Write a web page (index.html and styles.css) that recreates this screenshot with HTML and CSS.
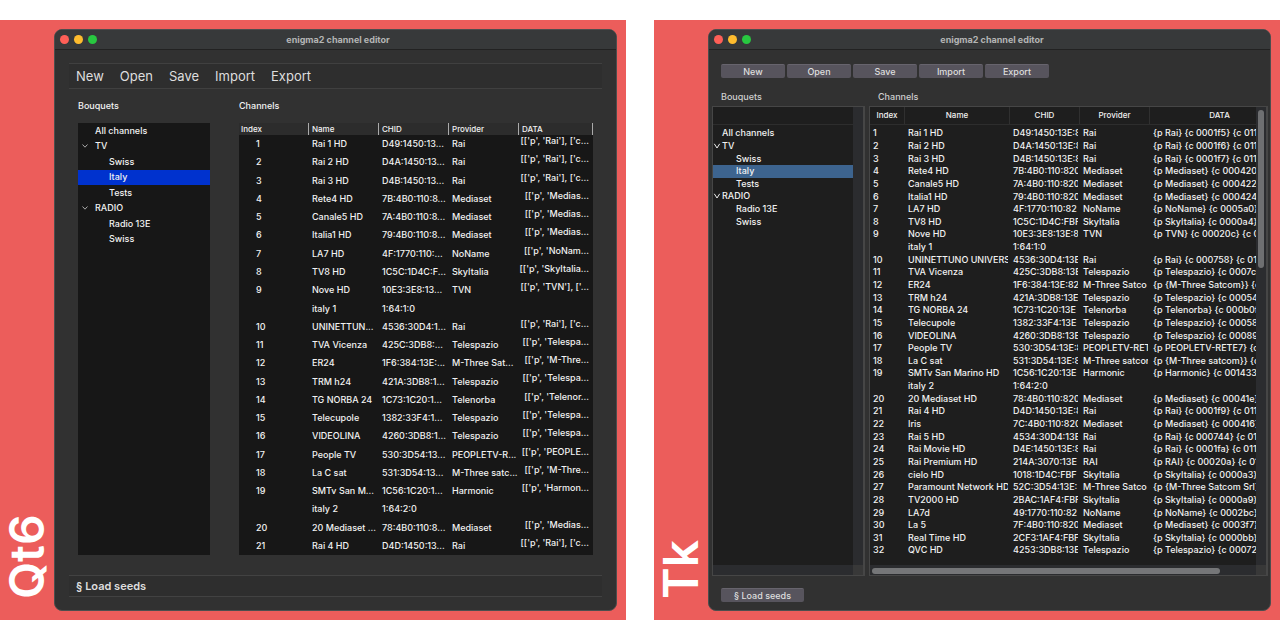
FILE: index.html
```
<!DOCTYPE html>
<html lang="en">
<head>
<meta charset="utf-8">
<title>enigma2 channel editor</title>
<link rel="stylesheet" href="styles.css">
</head>
<body>
<section class="panel">
  <h2 class="toolkit">Qt6</h2>
  <main class="window qt">
    <header class="titlebar"><span class="light red"></span><span class="light yellow"></span><span class="light green"></span><h1 class="title">enigma2 channel editor</h1></header>
    <nav class="qt-toolbar"><button>New</button><button>Open</button><button>Save</button><button>Import</button><button>Export</button></nav>
    <div class="qt-body">
      <section class="qt-side">
        <h3 class="label">Bouquets</h3>
        <div class="well">
          <ul class="tree">
            <li>All channels</li>
            <li><svg class="chevron" viewBox="0 0 8 8"><path d="M1.5 2.5 4 5.2 6.5 2.5"/></svg>TV</li>
            <li class="child">Swiss</li>
            <li class="child selected">Italy</li>
            <li class="child">Tests</li>
            <li><svg class="chevron" viewBox="0 0 8 8"><path d="M1.5 2.5 4 5.2 6.5 2.5"/></svg>RADIO</li>
            <li class="child">Radio 13E</li>
            <li class="child">Swiss</li>
          </ul>
        </div>
      </section>
      <section class="qt-main">
        <h3 class="label">Channels</h3>
        <table class="well">
          <thead><tr><th>Index</th><th>Name</th><th>CHID</th><th>Provider</th><th>DATA</th></tr></thead>
          <tbody>
            <tr><td>1</td><td>Rai 1 HD</td><td>D49:1450:13...</td><td>Rai</td><td>[['p', 'Rai'], ['c...</td></tr>
            <tr><td>2</td><td>Rai 2 HD</td><td>D4A:1450:13...</td><td>Rai</td><td>[['p', 'Rai'], ['c...</td></tr>
            <tr><td>3</td><td>Rai 3 HD</td><td>D4B:1450:13...</td><td>Rai</td><td>[['p', 'Rai'], ['c...</td></tr>
            <tr><td>4</td><td>Rete4 HD</td><td>7B:4B0:110:8...</td><td>Mediaset</td><td>[['p', 'Medias...</td></tr>
            <tr><td>5</td><td>Canale5 HD</td><td>7A:4B0:110:8...</td><td>Mediaset</td><td>[['p', 'Medias...</td></tr>
            <tr><td>6</td><td>Italia1 HD</td><td>79:4B0:110:8...</td><td>Mediaset</td><td>[['p', 'Medias...</td></tr>
            <tr><td>7</td><td>LA7 HD</td><td>4F:1770:110:...</td><td>NoName</td><td>[['p', 'NoNam...</td></tr>
            <tr><td>8</td><td>TV8 HD</td><td>1C5C:1D4C:F...</td><td>SkyItalia</td><td>[['p', 'SkyItalia...</td></tr>
            <tr><td>9</td><td>Nove HD</td><td>10E3:3E8:13...</td><td>TVN</td><td>[['p', 'TVN'], ['...</td></tr>
            <tr><td></td><td>italy 1</td><td>1:64:1:0</td><td></td><td></td></tr>
            <tr><td>10</td><td>UNINETTUN...</td><td>4536:30D4:1...</td><td>Rai</td><td>[['p', 'Rai'], ['c...</td></tr>
            <tr><td>11</td><td>TVA Vicenza</td><td>425C:3DB8:...</td><td>Telespazio</td><td>[['p', 'Telespa...</td></tr>
            <tr><td>12</td><td>ER24</td><td>1F6:384:13E:...</td><td>M-Three Sat...</td><td>[['p', 'M-Thre...</td></tr>
            <tr><td>13</td><td>TRM h24</td><td>421A:3DB8:1...</td><td>Telespazio</td><td>[['p', 'Telespa...</td></tr>
            <tr><td>14</td><td>TG NORBA 24</td><td>1C73:1C20:1...</td><td>Telenorba</td><td>[['p', 'Telenor...</td></tr>
            <tr><td>15</td><td>Telecupole</td><td>1382:33F4:1...</td><td>Telespazio</td><td>[['p', 'Telespa...</td></tr>
            <tr><td>16</td><td>VIDEOLINA</td><td>4260:3DB8:1...</td><td>Telespazio</td><td>[['p', 'Telespa...</td></tr>
            <tr><td>17</td><td>People TV</td><td>530:3D54:13...</td><td>PEOPLETV-R...</td><td>[['p', 'PEOPLE...</td></tr>
            <tr><td>18</td><td>La C sat</td><td>531:3D54:13...</td><td>M-Three satc...</td><td>[['p', 'M-Thre...</td></tr>
            <tr><td>19</td><td>SMTv San M...</td><td>1C56:1C20:1...</td><td>Harmonic</td><td>[['p', 'Harmon...</td></tr>
            <tr><td></td><td>italy 2</td><td>1:64:2:0</td><td></td><td></td></tr>
            <tr><td>20</td><td>20 Mediaset ...</td><td>78:4B0:110:8...</td><td>Mediaset</td><td>[['p', 'Medias...</td></tr>
            <tr><td>21</td><td>Rai 4 HD</td><td>D4D:1450:13...</td><td>Rai</td><td>[['p', 'Rai'], ['c...</td></tr>
          </tbody>
        </table>
      </section>
    </div>
    <footer class="qt-footer"><button>§ Load seeds</button></footer>
  </main>
</section>

<section class="panel">
  <h2 class="toolkit">Tk</h2>
  <main class="window tk">
    <header class="titlebar"><span class="light red"></span><span class="light yellow"></span><span class="light green"></span><h1 class="title">enigma2 channel editor</h1></header>
    <nav class="tk-toolbar"><button>New</button><button>Open</button><button>Save</button><button>Import</button><button>Export</button></nav>
    <div class="tk-body">
      <section class="tk-side">
        <h3 class="label">Bouquets</h3>
        <div class="frame">
          <div class="view">
            <div class="blank-head"></div>
            <ul class="tree">
              <li>All channels</li>
              <li><svg class="chevron" viewBox="0 0 8 8"><path d="M1.3 1.8 4 6 6.7 1.8"/></svg>TV</li>
              <li class="child">Swiss</li>
              <li class="child selected">Italy</li>
              <li class="child">Tests</li>
              <li><svg class="chevron" viewBox="0 0 8 8"><path d="M1.3 1.8 4 6 6.7 1.8"/></svg>RADIO</li>
              <li class="child">Radio 13E</li>
              <li class="child">Swiss</li>
            </ul>
          </div>
          <div class="track vertical"></div>
          <div class="track horizontal"></div>
        </div>
      </section>
      <section class="tk-main">
        <h3 class="label">Channels</h3>
        <div class="frame">
          <table class="view">
            <thead><tr><th>Index</th><th>Name</th><th>CHID</th><th>Provider</th><th>DATA</th></tr></thead>
            <tbody>
              <tr><td>1</td><td>Rai 1 HD</td><td>D49:1450:13E:8</td><td>Rai</td><td>{p Rai} {c 0001f5} {c 011</td></tr>
              <tr><td>2</td><td>Rai 2 HD</td><td>D4A:1450:13E:8</td><td>Rai</td><td>{p Rai} {c 0001f6} {c 011</td></tr>
              <tr><td>3</td><td>Rai 3 HD</td><td>D4B:1450:13E:8</td><td>Rai</td><td>{p Rai} {c 0001f7} {c 011</td></tr>
              <tr><td>4</td><td>Rete4 HD</td><td>7B:4B0:110:820</td><td>Mediaset</td><td>{p Mediaset} {c 000420</td></tr>
              <tr><td>5</td><td>Canale5 HD</td><td>7A:4B0:110:820</td><td>Mediaset</td><td>{p Mediaset} {c 000422</td></tr>
              <tr><td>6</td><td>Italia1 HD</td><td>79:4B0:110:820</td><td>Mediaset</td><td>{p Mediaset} {c 000424</td></tr>
              <tr><td>7</td><td>LA7 HD</td><td>4F:1770:110:82</td><td>NoName</td><td>{p NoName} {c 0005a0}</td></tr>
              <tr><td>8</td><td>TV8 HD</td><td>1C5C:1D4C:FBF</td><td>SkyItalia</td><td>{p SkyItalia} {c 0000a4}</td></tr>
              <tr><td>9</td><td>Nove HD</td><td>10E3:3E8:13E:8</td><td>TVN</td><td>{p TVN} {c 00020c} {c 0</td></tr>
              <tr><td></td><td>italy 1</td><td>1:64:1:0</td><td></td><td></td></tr>
              <tr><td>10</td><td>UNINETTUNO UNIVERS</td><td>4536:30D4:13E</td><td>Rai</td><td>{p Rai} {c 000758} {c 01</td></tr>
              <tr><td>11</td><td>TVA Vicenza</td><td>425C:3DB8:13E</td><td>Telespazio</td><td>{p Telespazio} {c 0007c</td></tr>
              <tr><td>12</td><td>ER24</td><td>1F6:384:13E:82</td><td>M-Three Satco</td><td>{p {M-Three Satcom}} {c</td></tr>
              <tr><td>13</td><td>TRM h24</td><td>421A:3DB8:13E</td><td>Telespazio</td><td>{p Telespazio} {c 00054</td></tr>
              <tr><td>14</td><td>TG NORBA 24</td><td>1C73:1C20:13E</td><td>Telenorba</td><td>{p Telenorba} {c 000b0f</td></tr>
              <tr><td>15</td><td>Telecupole</td><td>1382:33F4:13E</td><td>Telespazio</td><td>{p Telespazio} {c 00058</td></tr>
              <tr><td>16</td><td>VIDEOLINA</td><td>4260:3DB8:13E</td><td>Telespazio</td><td>{p Telespazio} {c 00089</td></tr>
              <tr><td>17</td><td>People TV</td><td>530:3D54:13E:8</td><td>PEOPLETV-RET</td><td>{p PEOPLETV-RETE7} {c</td></tr>
              <tr><td>18</td><td>La C sat</td><td>531:3D54:13E:8</td><td>M-Three satcor</td><td>{p {M-Three satcom}} {c</td></tr>
              <tr><td>19</td><td>SMTv San Marino HD</td><td>1C56:1C20:13E</td><td>Harmonic</td><td>{p Harmonic} {c 001433</td></tr>
              <tr><td></td><td>italy 2</td><td>1:64:2:0</td><td></td><td></td></tr>
              <tr><td>20</td><td>20 Mediaset HD</td><td>78:4B0:110:820</td><td>Mediaset</td><td>{p Mediaset} {c 00041e}</td></tr>
              <tr><td>21</td><td>Rai 4 HD</td><td>D4D:1450:13E:8</td><td>Rai</td><td>{p Rai} {c 0001f9} {c 011</td></tr>
              <tr><td>22</td><td>Iris</td><td>7C:4B0:110:820</td><td>Mediaset</td><td>{p Mediaset} {c 000416}</td></tr>
              <tr><td>23</td><td>Rai 5 HD</td><td>4534:30D4:13E</td><td>Rai</td><td>{p Rai} {c 000744} {c 01</td></tr>
              <tr><td>24</td><td>Rai Movie HD</td><td>D4E:1450:13E:8</td><td>Rai</td><td>{p Rai} {c 0001fa} {c 011</td></tr>
              <tr><td>25</td><td>Rai Premium HD</td><td>214A:3070:13E</td><td>RAI</td><td>{p RAI} {c 00020a} {c 01</td></tr>
              <tr><td>26</td><td>cielo HD</td><td>1018:1D4C:FBF</td><td>SkyItalia</td><td>{p SkyItalia} {c 0000a3}</td></tr>
              <tr><td>27</td><td>Paramount Network HD</td><td>52C:3D54:13E:</td><td>M-Three Satco</td><td>{p {M-Three Satcom Srl}</td></tr>
              <tr><td>28</td><td>TV2000 HD</td><td>2BAC:1AF4:FBF</td><td>SkyItalia</td><td>{p SkyItalia} {c 0000a9}</td></tr>
              <tr><td>29</td><td>LA7d</td><td>49:1770:110:82</td><td>NoName</td><td>{p NoName} {c 0002bc}</td></tr>
              <tr><td>30</td><td>La 5</td><td>7F:4B0:110:820</td><td>Mediaset</td><td>{p Mediaset} {c 0003f7}</td></tr>
              <tr><td>31</td><td>Real Time HD</td><td>2CF3:1AF4:FBF</td><td>SkyItalia</td><td>{p SkyItalia} {c 0000bb}</td></tr>
              <tr><td>32</td><td>QVC HD</td><td>4253:3DB8:13E</td><td>Telespazio</td><td>{p Telespazio} {c 00072</td></tr>
            </tbody>
          </table>
          <div class="track vertical"><div class="thumb"></div></div>
          <div class="track horizontal"><div class="thumb"></div></div>
        </div>
      </section>
    </div>
    <footer class="tk-footer"><button>§ Load seeds</button></footer>
  </main>
</section>
</body>
</html>
```
FILE: styles.css
```
* { box-sizing: border-box; }
body {
  margin: 0;
  min-height: 100vh;
  padding: 20px 0;
  display: flex;
  gap: 28px;
  background: #fff;
  color: #f2f2f2;
  font: 500 9px/12px Inter, "Liberation Sans", sans-serif;
}
h1, h2, h3, ul { margin: 0; padding: 0; font: inherit; }
ul { list-style: none; }
button { margin: 0; padding: 0; border: 0; background: none; color: inherit; font: inherit; }
table { border-spacing: 0; }
th, td { padding: 0; text-align: left; font-weight: inherit; white-space: nowrap; }

.panel {
  flex: 1;
  min-width: 0;
  display: flex;
  padding: 9px 9px 9px 0;
  background: #ec5d5b;
}
.toolkit {
  width: 54px;
  padding-top: 12px;
  writing-mode: vertical-rl;
  transform: rotate(180deg);
  color: #fff;
  font-size: 48px;
  line-height: 54px;
  font-weight: 600;
}
.window {
  flex: 1;
  min-width: 0;
  display: flex;
  flex-direction: column;
  overflow: hidden;
  border: 1px solid #4c4e4e;
  border-radius: 8px;
  background: #313131;
}
.titlebar {
  display: flex;
  align-items: center;
  gap: 5px;
  height: 20px;
  padding: 0 5px;
  border-bottom: 1px solid #222;
  background: #37393a;
}
.light { width: 9px; height: 9px; border-radius: 50%; }
.red { background: #ff5f57; }
.yellow { background: #febc2e; }
.green { background: #28c840; }
.title { flex: 1; padding-right: 37px; text-align: center; color: #b4b5b5; font-weight: 700; }

.tree { display: flex; flex-direction: column; }
.tree li { flex: 1; display: flex; align-items: center; }
.chevron { width: 8px; height: 8px; fill: none; stroke: #ddd; stroke-width: 1; }
thead, tbody { display: flex; flex-direction: column; }
tbody { flex: 1; }
tbody tr { flex: 1; }
tr { display: grid; align-items: center; }

/* Qt window */
.qt-toolbar {
  display: flex;
  align-items: center;
  gap: 16px;
  margin: 13px 14px 0;
  padding: 0 7px;
  height: 26px;
  border: solid #404040;
  border-width: 1px 0;
  background: #2e2e2e;
  color: #dedede;
  font-size: 13px;
  font-weight: 400;
}
.qt-body { flex: 1; display: flex; gap: 29px; padding: 11px 23px 0; }
.qt-side, .qt-main { display: flex; flex-direction: column; gap: 11px; }
.qt-side { width: 132px; }
.qt-main { flex: 1; }
.well { flex: 1; display: flex; flex-direction: column; background: #171717; }
.qt .tree { height: 124px; }
.qt .tree li { padding-left: 17px; }
.qt .tree .child { padding-left: 31px; }
.qt .tree .selected { background: #0032ce; }
.qt .tree .chevron { margin: 0 6px 0 -14px; stroke: #aaa; }
.qt tr { grid-template-columns: repeat(4, 70px) 1fr; }
.qt thead { background: #2c2c2c; font-size: 8px; }
.qt th { padding-left: 3px; border-right: 1px solid #aaa; }
.qt th:first-child { padding-left: 2px; }
.qt td { padding-left: 3px; }
.qt td:first-child { padding-left: 17px; }
.qt td:last-child { align-self: start; padding: 0 4px 0 0; text-align: right; }
.qt-footer {
  display: flex;
  align-items: center;
  margin: 20px 14px 13px;
  padding: 0 7px;
  height: 22px;
  border: solid #424242;
  border-width: 1px 0;
  background: #2e2e2e;
  color: #dedede;
  font-size: 11px;
  font-weight: 600;
}

/* Tk window */
.tk-toolbar { display: flex; gap: 2px; padding: 14px 12px 0; }
.tk-toolbar button, .tk-footer button {
  width: 64px;
  height: 14px;
  border-top: 1px solid #67646d;
  border-radius: 2px;
  background: #57545d;
  color: #dedede;
  line-height: 13px;
}
.tk-body { flex: 1; display: flex; gap: 4px; padding: 13px 2px 0 3px; }
.tk-side, .tk-main { display: flex; flex-direction: column; gap: 3px; }
.tk-side { width: 153px; }
.tk-main { flex: 1; min-width: 0; }
.tk .label { padding-left: 9px; color: #cfcfcf; }
.frame {
  flex: 1;
  display: grid;
  grid-template: 1fr 10px / minmax(0, 1fr) 10px;
  border: 1px solid #464646;
  border-right-width: 2px;
  background: #383838;
}
.view { display: flex; flex-direction: column; overflow: hidden; background: #1e1e1e; }
.blank-head { height: 18px; border-bottom: 1px solid #2d2d2d; }
.tk .tree { height: 103px; padding-top: 2px; }
.tk .tree li { padding-left: 9px; }
.tk .tree .child { padding-left: 23px; }
.tk .tree .selected { background: #3d648f; }
.tk .tree .chevron { margin: 0 1px 0 -9px; stroke: #eee; }
.tk tr { grid-template-columns: 35px 105px 70px 70px minmax(0, 1fr); }
.tk thead { border-bottom: 1px solid #2d2d2d; font-size: 8px; line-height: 17px; }
.tk th { border-right: 1px solid #303030; text-align: center; }
.tk th:last-child { padding-left: 33px; border: 0; }
.tk tbody { padding: 2px 0 8px; }
.tk td { overflow: hidden; padding-left: 3px; border-right: 2px solid transparent; }
.tk td:last-child { border: 0; }
.track { background: #2b2c2f; }
.vertical { padding: 3px 2px; }
.horizontal { padding: 3px 2px 1px; }
.vertical .thumb { width: 6px; height: 35%; border-radius: 3px; background: #6e6f71; }
.horizontal .thumb { width: 91%; height: 6px; border-radius: 3px; background: #757678; }
.tk-footer { padding: 12px 12px 8px; line-height: 0; }
.tk-footer button { width: 83px; }
```
